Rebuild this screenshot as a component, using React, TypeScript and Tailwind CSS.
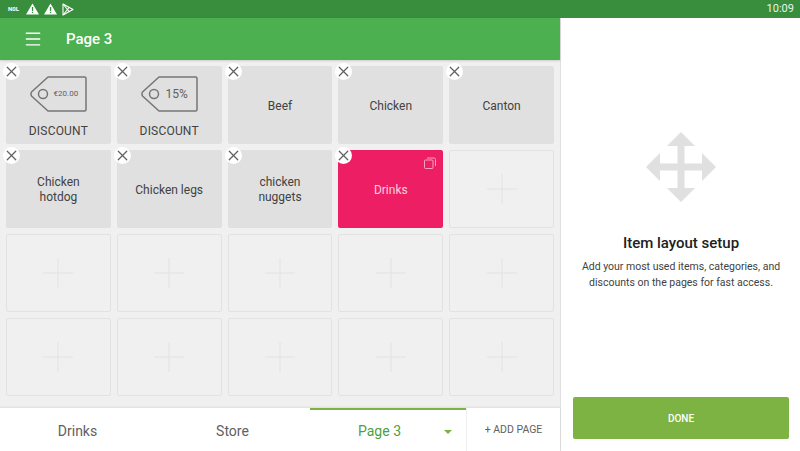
import { Menu, X } from 'lucide-react';

type Cell = { label?: string; tag?: string; pink?: boolean };

const cells: Cell[] = [
  { label: 'DISCOUNT', tag: '€20.00' },
  { label: 'DISCOUNT', tag: '15%' },
  { label: 'Beef' },
  { label: 'Chicken' },
  { label: 'Canton' },
  { label: 'Chicken hotdog' },
  { label: 'Chicken legs' },
  { label: 'chicken nuggets' },
  { label: 'Drinks', pink: true },
  ...Array.from({ length: 11 }, () => ({})),
];

function Warning() {
  return (
    <svg width="13" height="12" viewBox="0 0 13 12">
      <path d="M6.5 0.5 L13 11.5 H0 Z" fill="#fff" />
      <rect x="5.9" y="4" width="1.3" height="4" fill="#388e3c" />
      <rect x="5.9" y="8.8" width="1.3" height="1.3" fill="#388e3c" />
    </svg>
  );
}

function PlayStore() {
  return (
    <svg width="12" height="13" viewBox="0 0 12 13" fill="none" stroke="#fff" strokeWidth="1.1" strokeLinejoin="round">
      <path d="M1 1 L11 6.5 L1 12 Z" />
      <path d="M1 1 L7.5 9 M1 12 L7.5 4" />
    </svg>
  );
}

function PriceTag({ text }: { text: string }) {
  return (
    <div className="relative w-[57px] h-[36px]">
      <svg width="57" height="36" viewBox="0 0 57 36" fill="none" stroke="#757575" strokeWidth="1.5" strokeLinejoin="round" className="absolute inset-0">
        <path d="M18 1 H54.5 Q56 1 56 2.5 V33.5 Q56 35 54.5 35 H18 L1.5 20 Q0.5 18 1.5 16 Z" />
        <circle cx="13" cy="18" r="4.5" />
      </svg>
      <span className={`absolute left-[20px] top-0 w-[32px] h-[36px] flex items-center justify-center text-[#616161] ${text.length > 3 ? 'text-[8px]' : 'text-[12px]'}`}>
        {text}
      </span>
    </div>
  );
}

function GridCell({ cell }: { cell: Cell }) {
  if (!cell.label) {
    return (
      <div className="bg-[#f0f0f0] border border-[#e2e2e2] rounded-[2px] flex items-center justify-center">
        <svg width="30" height="30" viewBox="0 0 30 30" stroke="#e2e2e2" strokeWidth="1">
          <path d="M0 15 H30 M15 0 V30" />
        </svg>
      </div>
    );
  }
  return (
    <div className={`relative rounded-[2px] flex flex-col items-center justify-center ${cell.pink ? 'bg-[#ed1e63] text-[#fbd0de]' : 'bg-[#e0e0e0] text-[#424242]'}`}>
      <span className="absolute -left-[3px] -top-[3px] w-[17px] h-[17px] rounded-full bg-white flex items-center justify-center z-10">
        <X size={17} strokeWidth={1.8} color="#616161" />
      </span>
      {cell.pink && (
        <svg width="12" height="12" viewBox="0 0 12 12" fill="none" stroke="#f8a3bf" strokeWidth="1" className="absolute right-[7px] top-[7px]">
          <rect x="0.5" y="3" width="8.5" height="8.5" rx="1" />
          <path d="M3 1 H10 Q11.5 1 11.5 2.5 V9" />
        </svg>
      )}
      {cell.tag ? (
        <>
          <div className="mt-[3px]">
            <PriceTag text={cell.tag} />
          </div>
          <span className="text-[12px] leading-[14px] mt-[12px] tracking-[0.2px]">{cell.label}</span>
        </>
      ) : (
        <span className="text-[12px] leading-[15px] text-center w-[80px] mt-[2px]">{cell.label}</span>
      )}
    </div>
  );
}

export default function App() {
  return (
    <div className="w-[800px] h-[451px] overflow-hidden flex flex-col bg-white font-['Roboto',sans-serif]">
      <div className="h-[18px] shrink-0 bg-[#388e3c] flex items-center justify-between pl-[8px] pr-[6px]">
        <div className="flex items-center gap-[5px]">
          <span className="text-[6px] font-bold text-white w-[13px] leading-none">N0L</span>
          <Warning />
          <Warning />
          <PlayStore />
        </div>
        <span className="text-[11px] text-[#e8f5e9]">10:09</span>
      </div>
      <div className="flex-1 flex min-h-0">
        <div className="w-[561px] shrink-0 flex flex-col bg-[#f0f0f0] border-r border-[#e0e0e0]">
          <div className="h-[42px] shrink-0 bg-[#4caf50] flex items-center pl-[23px] text-white shadow-[0_1px_2px_rgba(0,0,0,0.15)]">
            <Menu size={20} strokeWidth={1.7} />
            <span className="ml-[23px] text-[15px] font-medium">Page 3</span>
          </div>
          <div className="grid grid-cols-5 grid-rows-[repeat(4,78px)] gap-[6px] pt-[6px] px-[6px]">
            {cells.map((cell, i) => (
              <GridCell key={i} cell={cell} />
            ))}
          </div>
          <div className="mt-auto h-[43px] bg-white flex shadow-[0_-1px_2px_rgba(0,0,0,0.08)]">
            <div className="w-[155px] pt-[3px] flex items-center justify-center text-[14px] text-[#616161]">Drinks</div>
            <div className="w-[155px] pt-[3px] flex items-center justify-center text-[14px] text-[#616161]">Store</div>
            <div className="relative w-[156px] pt-[1px] pr-[17px] flex items-center justify-center text-[14px] text-[#4c9f3f] border-t-2 border-[#7cb342]">
              Page 3
              <span className="absolute right-[14px] top-[20px] w-0 h-0 border-x-[4px] border-x-transparent border-t-[4px] border-t-[#7cb342]" />
            </div>
            <div className="flex-1 pt-[1px] flex items-center justify-center text-[10.5px] text-[#616161] border-l border-[#eeeeee]">+ ADD PAGE</div>
          </div>
        </div>
        <div className="flex-1 flex flex-col items-center pl-[12px] pr-[11px] pb-[12px]">
          <svg width="70" height="70" viewBox="0 0 70 70" fill="#e0e0e0" className="mt-[114px]">
            <path d="M35 0 L49 14 H38.5 V31.5 H56 V21 L70 35 L56 49 V38.5 H38.5 V56 H49 L35 70 L21 56 H31.5 V38.5 H14 V49 L0 35 L14 21 V31.5 H31.5 V14 H21 Z" />
          </svg>
          <div className="mt-[32px] text-[15px] leading-[18px] font-medium text-[#212121]">Item layout setup</div>
          <div className="mt-[7px] text-[10.5px] leading-[16px] text-[#424242] text-center w-[205px]">
            Add your most used items, categories, and discounts on the pages for fast access.
          </div>
          <button className="mt-auto w-full h-[42px] bg-[#7cb342] text-white text-[10px] font-medium rounded-[2px]">DONE</button>
        </div>
      </div>
    </div>
  );
}
